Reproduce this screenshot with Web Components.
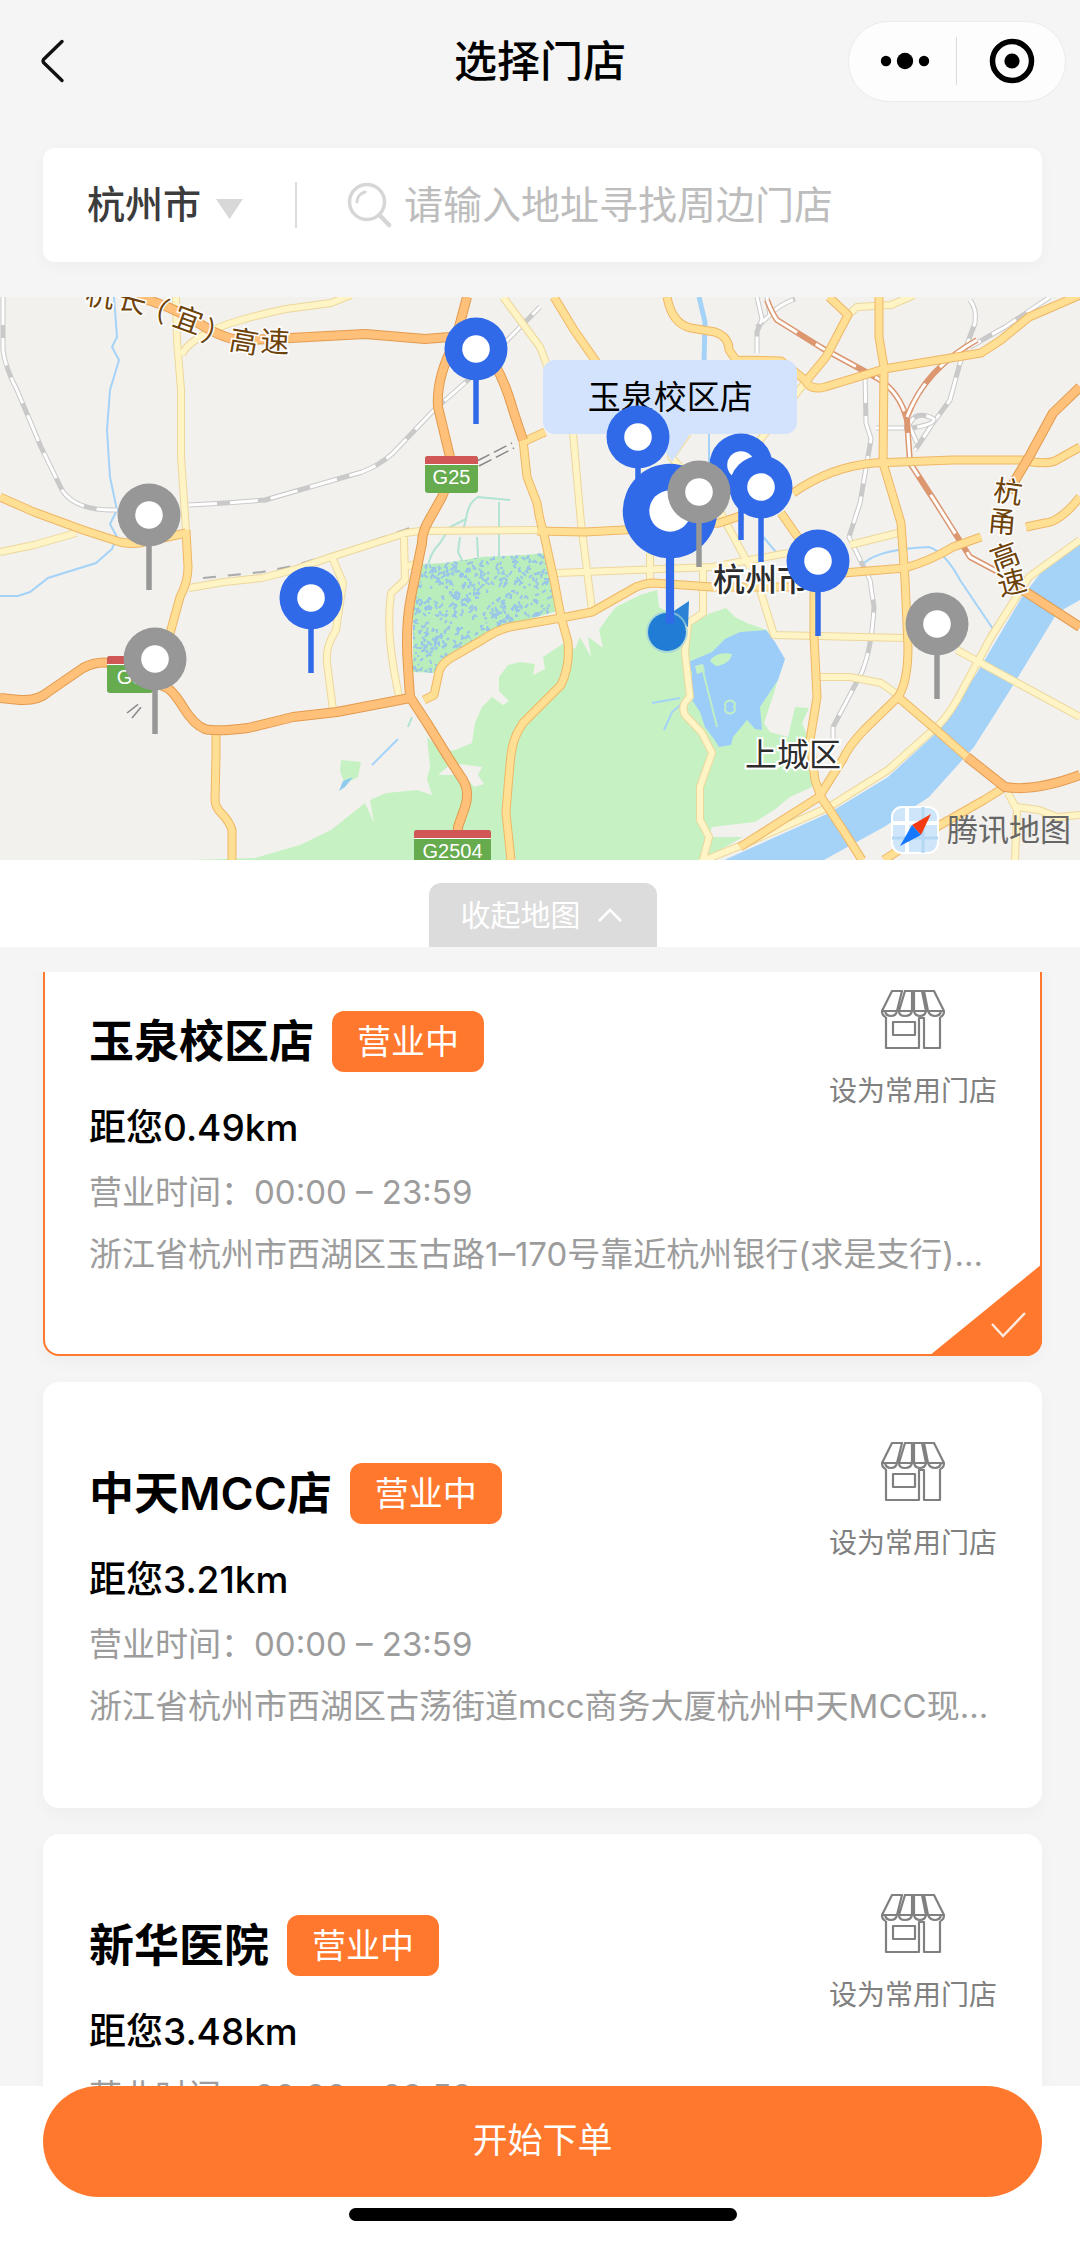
<!DOCTYPE html>
<html lang="zh-CN">
<head>
<meta charset="utf-8">
<meta name="viewport" content="width=device-width, initial-scale=1">
<title>选择门店</title>
<style>
    :root {
        --orange: #ff782d;
        --blue: #306ae8;
        --grey: #979797;
        --page: #f5f5f5;
    }

    body {
        margin: 0;
        background: var(--page);
        color: #000;
        font-family: Inter, "Noto Sans CJK SC", sans-serif;
    }
</style>
</head>
<body>
<store-page></store-page>

<script>
function makeTemplate(html) {
    const template = document.createElement('template');
    template.innerHTML = html;
    return template;
}

class BaseElement extends HTMLElement {
    constructor() {
        super();
        this.attachShadow({ mode: 'open' });
        this.shadowRoot.appendChild(this.constructor.template.content.cloneNode(true));
    }
}

/* ---------- nav bar ---------- */
class NavBar extends BaseElement {
    static template = makeTemplate(`
    <style>
    :host {
        display: grid;
        grid-template-columns: 1fr auto 1fr;
        align-items: center;
        height: 122px;
        padding: 0 14px;
    }
    button {
        border: 0;
        padding: 0;
        background: none;
        display: flex;
    }
    .back { padding-left: 16px; }
    h1 {
        margin: 0;
        font-size: 43px;
        line-height: 60px;
        font-weight: 500;
    }
    .capsule {
        justify-self: end;
        box-sizing: border-box;
        display: flex;
        align-items: center;
        width: 218px;
        height: 81px;
        padding-left: 30px;
        border: 1px solid #ebebeb;
        border-radius: 41px;
        background: #fdfdfd;
    }
    .line {
        width: 1px;
        height: 48px;
        margin: 0 31px 0 25px;
        background: #dcdcdc;
    }
    </style>
    <button class="back" aria-label="返回">
        <svg width="40" height="48" viewBox="0 0 40 48" fill="none" stroke="#111" stroke-width="3.4" stroke-linecap="round" stroke-linejoin="round"><path d="M32 4.500 13.500 22.500Q12.500 24 13.500 25.500L32 43.500"/></svg>
    </button>
    <h1><slot></slot></h1>
    <div class="capsule">
        <button aria-label="更多">
            <svg width="52" height="48" viewBox="0 0 52 48"><circle cx="7" cy="24" r="5.200"/><circle cx="26" cy="24" r="8.200"/><circle cx="45" cy="24" r="5.200"/></svg>
        </button>
        <span class="line"></span>
        <button aria-label="关闭">
            <svg width="48" height="48" viewBox="0 0 48 48"><circle cx="24" cy="24" r="19.500" fill="none" stroke="#000" stroke-width="5.500"/><circle cx="24" cy="24" r="7.600"/></svg>
        </button>
    </div>
    `);
}
customElements.define('nav-bar', NavBar);

/* ---------- search box ---------- */
class StoreSearch extends BaseElement {
    static template = makeTemplate(`
    <style>
    :host {
        display: flex;
        align-items: center;
        box-sizing: border-box;
        height: 114px;
        margin: 26px 38px 35px 43px;
        padding: 0 40px 0 44px;
        border-radius: 12px;
        background: #fff;
        box-shadow: 0 4px 16px rgba(0, 0, 0, .03);
    }
    select {
        appearance: none;
        border: 0;
        padding: 0 0 2px;
        margin: 0 14px 0 0;
        background: none;
        color: #3c3c3c;
        font: inherit;
        font-size: 38px;
        line-height: 54px;
        font-weight: 500;
    }
    .arrow { margin-top: 8px; }
    .line {
        width: 2px;
        height: 46px;
        margin: 0 50px 0 52px;
        background: #ddd;
    }
    label { display: flex; margin-right: 12px; }
    input {
        flex: 1;
        min-width: 0;
        border: 0;
        padding: 0;
        outline: 0;
        background: none;
        font: inherit;
        font-size: 39px;
        line-height: 54px;
        height: 54px;
    }
    input::placeholder { color: #bdbdbd; }
    </style>
    <select aria-label="城市"><option>杭州市</option></select>
    <svg class="arrow" width="27" height="20" viewBox="0 0 27 20"><path d="M0 0H27L13.500 20Z" fill="#d8d8d8"/></svg>
    <span class="line"></span>
    <label for="q" aria-label="搜索">
        <svg width="45" height="46" viewBox="0 0 45 46" fill="none" stroke="#d6d6d6" stroke-linecap="round">
            <circle cx="20" cy="20" r="17.500" stroke-width="3.500"/>
            <path d="M32.500 33 42 43" stroke-width="4.500"/>
            <path d="M10 20A10.500 10.500 0 0 1 18 10" stroke-width="3"/>
        </svg>
    </label>
    <input id="q" type="text" placeholder="请输入地址寻找周边门店">
    `);
}
customElements.define('store-search', StoreSearch);

/* ---------- map pin ---------- */
class MapPin extends BaseElement {
    static template = makeTemplate(`
    <style>
    :host {
        position: absolute;
        width: 64px;
        height: 108px;
        transform: translate(-50%, -32px);
        color: var(--blue);
    }
    :host([closed]) { color: var(--grey); }
    :host([big]) {
        width: 96px;
        height: 162px;
        transform: translate(-50%, -48px);
    }
    svg { display: block; width: 100%; height: 100%; }
    </style>
    <svg viewBox="0 0 64 108"><path d="M32 60V107" stroke="currentColor" stroke-width="5.500"/><circle cx="32" cy="32" r="31.500" fill="currentColor"/><circle cx="32" cy="32" r="13.800" fill="#fff"/></svg>
    `);

    connectedCallback() {
        this.style.left = this.getAttribute('x') / 10.8 + '%';
        this.style.top = this.getAttribute('y') + 'px';
    }
}
customElements.define('map-pin', MapPin);

/* ---------- map ---------- */
// [kind, path], drawn on a 1080 x 563 canvas
const roads = [
    ['pale', 'M0 255 34 248 76 236'],
    ['pale', 'M176 0 177 43 181 93V160L186 233'],
    ['pale', 'M182 58Q184 50 200 40T241 23 286 12L331 6 351 -2'],
    ['pale', 'M189 291 224 285 262 281 293 273 331 260 406 236 420 234 537 233'],
    ['pale', 'M332 260 343 286 336 333Q325 350 327 366L333 413'],
    ['pale', 'M404 240 405 283 391 296Q388 320 390 343T399 400M405 270 422 265'],
    ['pale', 'M503 0 540 50 573 136 581 226 592 313'],
    ['pale', 'M848 18 857 10 891 8 914 -2'],
    ['pale', 'M807 83 760 143 690 220M688 136 671 160 719 213 750 270'],
    ['pale', 'M557 276 712 270 788 256M650 256V283M850 248 898 236'],
    ['pale', 'M703 270V316L688 326 685 356 690 400Q680 408 685 418L702 436 712 456 700 490V523L709 540 703 563'],
    ['pale', 'M760 293 774 338 905 341M819 380H850L881 386 898 398'],
    ['pale', 'M1080 243 1029 280 991 340 957 403Q944 425 933 433L888 473 829 510 747 546 700 565'],
    ['pale', 'M957 353 1080 420M1008 496 1017 513 1015 563M1017 510 1039 513 1057 520 1080 518'],
    ['yellow', 'M0 200 34 215 83 233 120 245Q135 248 145 245L186 236'],
    ['yellow', 'M186 233 188 270Q188 285 180 300L169 340'],
    ['yellow', 'M216 436V460L215 503Q215 510 222 517T232 533V563'],
    ['yellow', 'M523 143 527 180 537 206Q540 225 543 233L554 283 561 320 568 345Q570 370 561 388L523 426Q513 440 511 458T506 516L511 563'],
    ['yellow', 'M424 403 434 398 439 375Q441 367 451 361L482 343Q500 331 515 329L561 321 592 315 636 290Q646 286 654 286L712 290H800'],
    ['yellow', 'M537 234 585 235 623 233 719 226 743 218'],
    ['yellow', 'M523 145 545 135'],
    ['yellow', 'M554 0 574 33 602 73'],
    ['yellow', 'M667 0Q672 27 691 31L715 35Q729 40 729 53L736 63 781 64 805 83Q810 94 825 90L884 72 981 56 1001 43 1029 20 1080 -2'],
    ['yellow', 'M829 0 848 18 826 60 807 83'],
    ['yellow', 'M879 0V40L884 70 883 166 901 226 905 283 908 350Q908 385 898 400L864 433Q848 450 843 462L819 500'],
    ['yellow', 'M793 196Q830 170 874 166L953 163H1022Q1045 168 1055 164L1080 150'],
    ['yellow', 'M1080 200Q1060 225 1045 226L1026 230'],
    ['yellow', 'M781 216 802 246 814 280V340L817 400 810 443 815 483 821 500 843 533 862 563'],
    ['yellow', 'M843 276 905 271Q930 264 953 250L981 240'],
    ['yellow', 'M898 400 933 430 967 460M1005 490 984 503 919 540 884 563'],
    ['yellow', 'M819 500 740 550'],
    ['orange', 'M137 0Q170 8 200 27T250 43L290 41 365 37 425 42 475 38'],
    ['orange', 'M467 0 455 45Q436 80 438 110L450 160V180L442 200 429 223Q422 235 422 246L411 300Q405 330 408 370L410 400 427 426 448 460 463 483Q470 495 465 510L458 530V560'],
    ['orange', 'M0 401 20 403Q38 404 48 395L83 371Q96 364 110 366L165 390Q172 392 183 410T205 432Q215 435 248 431L293 420 337 415 410 401'],
    ['orange', 'M495 68Q505 85 513 113L523 143'],
    ['orange', 'M1080 90 1053 116 1029 160 1008 195'],
    ['orange', 'M1015 288 1080 330M967 460 1005 490Q1035 495 1080 478']
];

const rails = [
    'M3 0V53Q5 70 17 93L41 150 62 193Q75 214 117 213M189 208 225 206 265 203 362 175Q380 168 393 156L434 113 468 83 540 10',
    'M757 0 762 22 757 35V56M767 0 770 18 757 30M770 18Q778 8 795 2',
    'M865 78 866 126 871 142 860 206 849 240 870 283 874 310Q872 350 862 375L833 430V446',
    'M970 3Q977 12 975 26L960 66 950 103 933 126 915 153',
    'M1050 0 1005 30 970 50M876 131 912 131Q935 127 934 122 916 112 909 128L917 146'
];

const orangeRails = [
    'M767 3Q772 16 777 23L822 51 877 81Q900 95 907 123L910 166 936 206 970 260 1000 276',
    'M977 43Q925 72 907 120'
];

// characters of road names follow the road: [char, x, y, angle]
const roadNames = [
    ['杭', 100, -1, 8], ['长', 132, 4, 15], ['（', 154, 12, 18], ['宜', 188, 23, 20],
    ['）', 217, 38, 20], ['高', 244, 45, 10], ['速', 275, 45, 3],
    ['杭', 1008, 195, 8], ['甬', 1002, 225, 5], ['高', 1005, 260, -20], ['速', 1012, 286, -14]
];

class StoreMap extends BaseElement {
    static template = makeTemplate(`
    <style>
    :host {
        display: block;
        position: relative;
        height: 563px;
        overflow: hidden;
        background: #f2f1ee;
    }
    svg.base { display: block; width: 100%; height: 100%; }
    .callout {
        position: absolute;
        left: 50.3%;
        top: 63px;
        width: 254px;
        border-radius: 12px;
        background: #d3e3fd;
        font-size: 33px;
        line-height: 74px;
        text-align: center;
    }
    .callout::after {
        content: "";
        position: absolute;
        left: 111px;
        top: 100%;
        border: solid transparent;
        border-width: 28px 18px 0;
        border-top-color: #d3e3fd;
    }
    .brand {
        position: absolute;
        right: 9px;
        bottom: 6px;
        display: flex;
        align-items: center;
        gap: 8px;
        color: #666;
        font-size: 31px;
        line-height: 48px;
    }
    </style>
    <svg class="base" viewBox="0 0 1080 563" preserveAspectRatio="none">
        <defs>
            <clipPath id="marsh"><path d="M423 267 445 266 482 260 525 258 545 256 557 314 510 328 478 342 451 360 437 376 413 375V316L418 283Z"/></clipPath>
        </defs>
        <path fill="#c6f2c3" d="M190 563 255 561 300 548 331 533 365 506 374 526 370 503 386 496 417 493 432 498 427 482 430 470 427 440 443 455 455 453 472 446 475 426 482 410 492 400 503 408 509 404 499 394V380L508 368 520 365 535 367 533 378 545 372 543 360 564 346 575 352 580 340 591 360 588 340 603 351 599 333 608 320 616 310 640 298 657 293 659 310 685 325 726 311 735 320 747 326 767 333 784 363 774 396 764 426 770 435 788 440 795 410 809 411 802 426 812 450V490L790 500 774 513 755 525 712 530 709 540 743 540 702 563Z"/>
        <path fill="#c6f2c3" d="M341 463 361 465 358 480 345 487 340 474Z"/>
        <path fill="#f2f1ee" d="M438 478 452 466 482 470 478 478 484 487 474 490 464 478Z"/>
        <g clip-path="url(#marsh)">
            <rect x="405" y="250" width="160" height="130" fill="#b9eebc"/>
            <path id="ponds" fill="none" stroke="#93bdf0" stroke-width="2" opacity=".85"/>
        </g>
        <path fill="#a5d3f8" d="M1022 300 1050 264 1080 245V303L1057 316 1012 390 974 450 929 500 884 530 822 564H722L829 516 888 480 936 436 977 376Z"/>
        <path fill="#9ccdf8" d="M766 333 775 345 785 362 778 383 770 395 760 410 762 433 755 432 747 423 733 440 731 448 719 450 714 442 705 430 700 415 692 403V375L686 366 712 355 725 342 740 335Z"/>
        <path fill="#c6f2c3" d="M710 364Q716 354 732 357 730 367 716 369ZM695 369 703 367 705 374 697 377Z"/>
        <path fill="none" stroke="#bfeec6" stroke-width="2" d="M702 370 717 430M726 410a5 4 0 1 0 8 0 5 4 0 1 0-8 0"/>
        <path fill="none" stroke="#a5d3f8" stroke-width="2" d="M652 406 680 401M664 433 672 415 686 403M114 0 117 40 112 50 119 63 110 93 107 133 110 180 117 213 110 227 117 240 112 252 96 266 48 281 30 295 18 299H0M372 468 398 442M864 266Q880 252 929 250 945 255 960 283L995 335M709 136V170M760 236 780 260"/>
        <path fill="#8fcbee" d="M339 494 343 484 353 480 345 490Z"/>
        <path fill="none" stroke="#a5d3f8" stroke-width="5" d="M699 0 705 25 704 66"/>
        <path fill="none" stroke="#b2e3d3" stroke-width="2" d="M510 203 478 200Q468 206 466 222L450 230 440 246Q430 256 428 270M466 222 463 234M412 420 408 430M460 240 458 255 462 263M477 240 478 260M499 205V262"/>
        <g id="rails"></g>
        <path fill="none" stroke="#aaa" stroke-width="2" stroke-dasharray="13 12" d="M203 281 262 275 293 269 358 249 410 231H535"/>
        <g id="roads"></g>
        <path fill="none" stroke="#888" stroke-width="1.500" stroke-dasharray="14 5" d="M477 164 512 146M479 169 514 151M127 416 140 406M132 421 142 409"/>
        <g id="shields" font-family="Liberation Sans, sans-serif" font-size="20" fill="#fff" text-anchor="middle"></g>
        <g id="names" font-size="29" fill="#6e430a" stroke="#fff" stroke-width="3" paint-order="stroke" text-anchor="middle"></g>
        <g fill="#2d2d2d" stroke="#fff" stroke-width="4" paint-order="stroke" font-size="32">
            <text x="713" y="294" font-weight="500">杭州市</text>
            <text x="745" y="469">上城区</text>
        </g>
        <path d="M668 318 689 304 688 330Z" fill="#2c82d4"/>
        <circle cx="667" cy="335" r="21" fill="#9fd0dc" opacity=".7"/>
        <circle cx="667" cy="335" r="19" fill="#207cd4"/>
    </svg>
    <div class="callout">玉泉校区店</div>
    <map-pin x="475.500" y="52"></map-pin>
    <map-pin x="148.500" y="218" closed></map-pin>
    <map-pin x="155" y="362" closed></map-pin>
    <map-pin x="311" y="301"></map-pin>
    <map-pin x="638" y="140"></map-pin>
    <map-pin x="741" y="168"></map-pin>
    <map-pin x="669.500" y="214" big></map-pin>
    <map-pin x="761" y="190"></map-pin>
    <map-pin x="699" y="195" closed></map-pin>
    <map-pin x="818" y="264"></map-pin>
    <map-pin x="937" y="327" closed></map-pin>
    <div class="brand">
        <svg width="48" height="48" viewBox="0 0 48 48">
            <rect x="1" y="1" width="46" height="46" rx="10" fill="#cfe6fa" stroke="#fff" stroke-width="2"/>
            <path d="M16 1V47M1 17H47" stroke="#fff" stroke-width="4"/>
            <path d="M32 1V47M1 32H47" stroke="#b4d8f4" stroke-width="3"/>
            <path d="M40 8 21 19 30 29Z" fill="#f43a12"/>
            <path d="M9 40 21 19 30 29Z" fill="#1677ff"/>
        </svg>
        <span>腾讯地图</span>
    </div>
    `);

    constructor() {
        super();
        const colours = {
            pale: ['#ecd79c', '#fff4c6', 6],
            yellow: ['#efb765', '#ffdf94', 7],
            orange: ['#e39a4d', '#ffc17a', 8]
        };
        const path = (d, colour, width, extra = '') =>
            `<path d="${d}" fill="none" stroke="${colour}" stroke-width="${width}" stroke-linejoin="round" ${extra}/>`;
        let html = '';

        // all edges of one kind go under its fills, so that crossings stay open
        for (const kind of ['pale', 'yellow', 'orange']) {
            const [edge, fill, width] = colours[kind];
            const list = roads.filter(road => road[0] === kind);
            html += list.map(road => path(road[1], edge, width + 2)).join('');
            html += list.map(road => path(road[1], fill, width)).join('');
        }
        this.shadowRoot.querySelector('#roads').innerHTML = html;

        html = rails.map(d => path(d, '#c9c9c9', 5) + path(d, '#fff', 3, 'stroke-dasharray="28 13"')).join('');
        html += orangeRails.map(d => path(d, '#dc9670', 6) + path(d, '#fff', 3, 'stroke-dasharray="46 22"')).join('');
        this.shadowRoot.querySelector('#rails').innerHTML = html;

        html = [['G25', 425, 159, 53], ['G2504', 414, 533, 77], ['G3', 107, 359, 46]].map(([name, x, y, w]) => `
            <rect x="${x}" y="${y}" width="${w}" height="37" rx="3" fill="#67ab4f"/>
            <path d="M${x} ${y + 8}V${y + 3}Q${x} ${y} ${x + 3} ${y}H${x + w - 3}Q${x + w} ${y} ${x + w} ${y + 3}V${y + 8}Z" fill="#d15656"/>
            <path d="M${x} ${y + 8.5}H${x + w}" stroke="#fff"/>
            <text x="${x + w / 2}" y="${y + 28}">${name}</text>`).join('');
        this.shadowRoot.querySelector('#shields').innerHTML = html;

        this.shadowRoot.querySelector('#names').innerHTML = roadNames.map(([char, x, y, angle]) =>
            `<text transform="translate(${x} ${y}) rotate(${angle})" y="10">${char}</text>`).join('');

        // small ponds and ditches of the wetland, the same ones on every load
        let seed = 7;
        const random = n => {
            seed = seed * 16807 % 2147483647;
            return seed % n;
        };
        let ponds = '';
        for (let i = 0; i < 620; i++) {
            ponds += `M${410 + random(148)} ${254 + random(122)}l${random(7) - 3} ${random(7) - 3} ${random(5) - 2} ${random(5) - 2}`;
        }
        this.shadowRoot.querySelector('#ponds').setAttribute('d', ponds);
    }
}
customElements.define('store-map', StoreMap);

/* ---------- map toggle ---------- */
class MapToggle extends BaseElement {
    static template = makeTemplate(`
    <style>
    :host {
        display: flex;
        justify-content: center;
        padding: 23px 0 0 6px;
        background: #fff;
    }
    button {
        display: flex;
        align-items: center;
        justify-content: center;
        gap: 17px;
        width: 228px;
        height: 64px;
        border: 0;
        padding: 0 4px 0 0;
        border-radius: 12px 12px 0 0;
        background: #dcdcdc;
        color: #fff;
        font: inherit;
        font-size: 30px;
        line-height: 42px;
    }
    </style>
    <button><slot></slot>
        <svg width="24" height="14" viewBox="0 0 24 14" fill="none" stroke="#fff" stroke-width="2.500"><path d="M1 13 12 2 23 13"/></svg>
    </button>
    `);
}
customElements.define('map-toggle', MapToggle);

/* ---------- store card ---------- */
class StoreCard extends BaseElement {
    static template = makeTemplate(`
    <style>
    :host {
        display: block;
        position: relative;
        box-sizing: border-box;
        padding: 58px 43px 79px 44px;
        border: 2px solid #fff;
        border-radius: 16px;
        background: #fff;
        box-shadow: 0 6px 18px rgba(0, 0, 0, .03);
    }
    :host([selected]) { border-color: var(--orange); }
    .top {
        display: flex;
        justify-content: space-between;
        align-items: flex-start;
    }
    .info { padding-top: 20px; }
    .title {
        display: flex;
        align-items: center;
        gap: 18px;
    }
    h2 {
        margin: 0;
        padding-top: 2px;
        font-size: 45px;
        line-height: 60px;
        font-weight: 600;
    }
    .badge {
        padding: 0 25px;
        border-radius: 12px;
        background: var(--orange);
        color: #fff;
        font-size: 34px;
        line-height: 61px;
    }
    p { margin: 0; }
    .distance {
        margin-top: 31px;
        font-size: 37px;
        line-height: 50px;
        font-weight: 500;
    }
    .hours, .address {
        color: #9c9c9c;
        font-size: 33px;
        line-height: 42px;
    }
    .hours { margin-top: 18px; }
    .address {
        margin-top: 20px;
        overflow: hidden;
        white-space: nowrap;
        text-overflow: ellipsis;
    }
    .favourite {
        display: flex;
        flex-direction: column;
        align-items: center;
        gap: 21px;
        border: 0;
        padding: 0;
        background: none;
        color: #808080;
        font: inherit;
        font-size: 28px;
        line-height: 40px;
    }
    .corner {
        display: none;
        position: absolute;
        right: -2px;
        bottom: -2px;
        border-radius: 0 0 16px 0;
    }
    :host([selected]) .corner { display: block; }
    </style>
    <div class="top">
        <div class="info">
            <div class="title"><h2></h2><span class="badge">营业中</span></div>
            <p class="distance"></p>
            <p class="hours">营业时间：00:00 – 23:59</p>
        </div>
        <button class="favourite">
            <svg width="64" height="60" viewBox="0 0 64 60" fill="none" stroke="#808080" stroke-width="2.200" stroke-linejoin="round">
                <path d="M11 1H21L16 21H1ZM24 1H31V21H18ZM33 1H41L45 21H33ZM43 1H53L63 21H47Z"/>
                <path d="M1 21Q1 26 5 27M63 21Q63 26 59 27M4 21H16Q15 26 10 26T4 21M18 21H31Q30 26 24 26T18 21M33 21H45Q44 26 39 26T33 21M47 21H60Q59 26 54 26T47 21"/>
                <path d="M5 27V58H38V28H43V58H59V27"/>
                <path d="M12 32H34V45H12Z"/>
            </svg>
            <span>设为常用门店</span>
        </button>
    </div>
    <p class="address"></p>
    <svg class="corner" width="113" height="92" viewBox="0 0 113 92" role="img" aria-label="已选择">
        <path d="M113 0V92H0Z" fill="var(--orange)"/>
        <path d="M63 60 74 72 96 49" fill="none" stroke="#ffe9dc" stroke-width="2.500"/>
    </svg>
    `);

    connectedCallback() {
        this.shadowRoot.querySelector('h2').innerText = this.getAttribute('name');
        this.shadowRoot.querySelector('.distance').innerText = '距您' + this.getAttribute('distance');
        this.shadowRoot.querySelector('.address').innerText = this.getAttribute('address');
    }
}
customElements.define('store-card', StoreCard);

/* ---------- order bar ---------- */
class OrderBar extends BaseElement {
    static template = makeTemplate(`
    <style>
    :host {
        display: flex;
        flex-direction: column;
        align-items: center;
        gap: 11px;
        padding: 0 38px 20px 43px;
        background: #fff;
    }
    button {
        width: 100%;
        height: 111px;
        border: 0;
        padding: 0 0 4px;
        border-radius: 56px;
        background: var(--orange);
        color: #fff;
        font: inherit;
        font-size: 35px;
        line-height: 50px;
    }
    .home {
        width: 388px;
        height: 13px;
        border-radius: 7px;
        background: #000;
    }
    </style>
    <button><slot></slot></button>
    <div class="home"></div>
    `);
}
customElements.define('order-bar', OrderBar);

/* ---------- page ---------- */
class StorePage extends BaseElement {
    static template = makeTemplate(`
    <style>
    :host {
        display: flex;
        flex-direction: column;
        height: 100vh;
    }
    nav-bar, store-search, store-map, map-toggle, order-bar { flex: none; }
    main {
        flex: 1;
        min-height: 0;
        margin-top: 25px;
        padding: 0 38px 0 43px;
        overflow: auto;
        scrollbar-width: none;
        display: flex;
        flex-direction: column;
        gap: 26px;
    }
    store-card { flex: none; }
    </style>
    <nav-bar>选择门店</nav-bar>
    <store-search></store-search>
    <store-map></store-map>
    <map-toggle>收起地图</map-toggle>
    <main>
        <store-card selected name="玉泉校区店" distance="0.49km" address="浙江省杭州市西湖区玉古路1–170号靠近杭州银行(求是支行)旁边一楼"></store-card>
        <store-card name="中天MCC店" distance="3.21km" address="浙江省杭州市西湖区古荡街道mcc商务大厦杭州中天MCC现代商务中心"></store-card>
        <store-card name="新华医院" distance="3.48km" address="浙江省杭州市西湖区古荡街道"></store-card>
    </main>
    <order-bar>开始下单</order-bar>
    `);

    connectedCallback() {
        // the list opens a little way down
        this.shadowRoot.querySelector('main').scrollTop = 42;
    }
}
customElements.define('store-page', StorePage);
</script>
</body>
</html>
